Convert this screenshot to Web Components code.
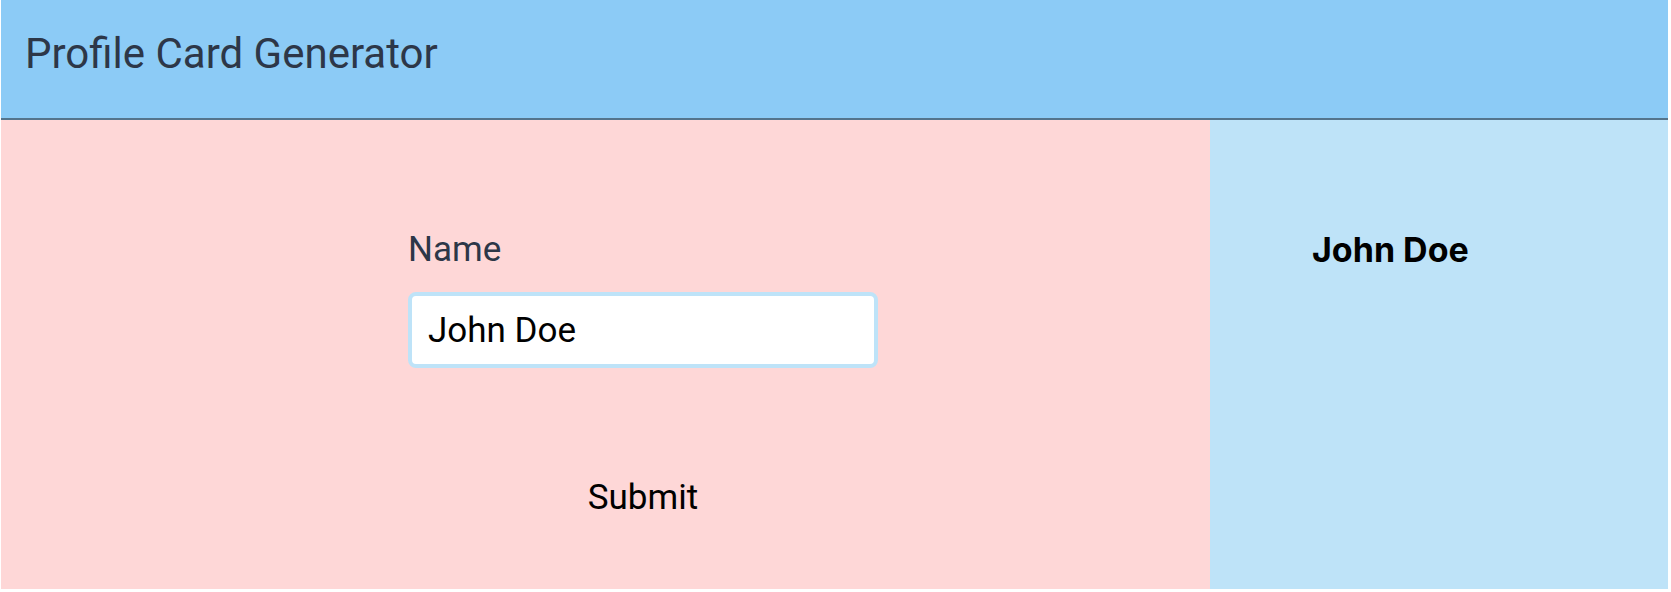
<!DOCTYPE html>
<html lang="en">
<head>
<meta charset="utf-8">
<meta name="viewport" content="width=device-width, initial-scale=1">
<title>Profile Card Generator</title>
<style>
  html { background: #fff; }
  body { margin: 0; font-family: Roboto, "Liberation Sans", sans-serif; color: #000; }
</style>
</head>
<body>
<profile-app>
  <app-header slot="header">Profile Card Generator</app-header>
  <profile-form slot="form" name="John Doe"></profile-form>
  <profile-card slot="card">John Doe</profile-card>
</profile-app>
<script>
  const define = (tag, html, setup) => {
    const template = document.createElement('template');
    template.innerHTML = html;
    customElements.define(tag, class extends HTMLElement {
      constructor() {
        super();
        this.attachShadow({ mode: 'open' }).append(template.content.cloneNode(true));
      }
      connectedCallback() { if (setup) setup(this, this.shadowRoot); }
    });
  };

  define('app-header', `
    <style>
      :host { display: block; background: #8ccbf6; border-bottom: 2px solid #54748c; padding: 24px 24px 34px; }
      h1 { margin: 0; font-size: 42px; line-height: 60px; font-weight: 400; color: #2d3748; }
    </style>
    <h1><slot></slot></h1>`);

  define('profile-form', `
    <style>
      :host { display: block; background: #fed7d7; padding: 104px 0 64px; }
      form { display: grid; grid-template-columns: 407fr 470fr 332fr; font-size: 35px; line-height: 52px; }
      label, input, button { grid-column: 2; font: inherit; box-sizing: border-box; }
      label { color: #2d3748; }
      input { width: 100%; height: 76px; margin: 16px 0 104px; padding: 0 16px; color: #000; background: #fff;
              border: 4px solid #bee3f8; border-radius: 8px; outline: none; }
      button { justify-self: center; padding: 0 16px; border: 0; background: none; color: #000; cursor: pointer; }
    </style>
    <form>
      <label for="name">Name</label>
      <input id="name" type="text" autocomplete="off">
      <button type="submit">Submit</button>
    </form>`, (host, root) => {
      const input = root.querySelector('input');
      input.value = host.getAttribute('name') || '';
      root.querySelector('form').addEventListener('submit', event => {
        event.preventDefault();
        document.querySelector('profile-card').textContent = input.value;
      });
    });

  define('profile-card', `
    <style>
      :host { display: block; background: #bee3f8; padding: 104px 102px; }
      h2 { margin: 0; font-family: Inter, "Liberation Sans", sans-serif; font-size: 34px; line-height: 52px; font-weight: 700; }
    </style>
    <h2><slot></slot></h2>`);

  define('profile-app', `
    <style>
      :host { display: grid; grid-template-rows: auto 1fr; min-height: calc(100vh - 3px); margin: 0 3px 3px 1px; }
      main { display: grid; grid-template-columns: minmax(0, 1209fr) minmax(0, 458fr); }
    </style>
    <slot name="header"></slot>
    <main><slot name="form"></slot><slot name="card"></slot></main>`);
</script>
</body>
</html>
